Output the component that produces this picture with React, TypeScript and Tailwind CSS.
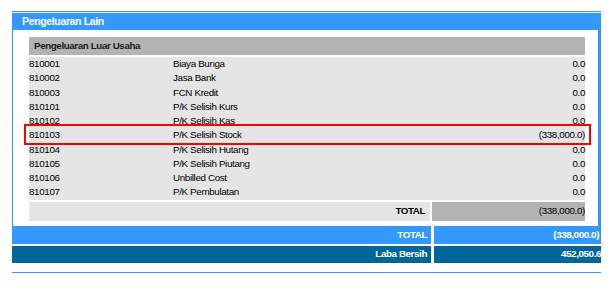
const rows = [
  { code: '810001', name: 'Biaya Bunga', amount: '0.0' },
  { code: '810002', name: 'Jasa Bank', amount: '0.0' },
  { code: '810003', name: 'FCN Kredit', amount: '0.0' },
  { code: '810101', name: 'P/K Selisih Kurs', amount: '0.0' },
  { code: '810102', name: 'P/K Selisih Kas', amount: '0.0' },
  { code: '810103', name: 'P/K Selisih Stock', amount: '(338,000.0)', marked: true },
  { code: '810104', name: 'P/K Selisih Hutang', amount: '0.0' },
  { code: '810105', name: 'P/K Selisih Piutang', amount: '0.0' },
  { code: '810106', name: 'Unbilled Cost', amount: '0.0' },
  { code: '810107', name: 'P/K Pembulatan', amount: '0.0' },
];

export default function App() {
  return (
    <div className="h-[289px] w-[613px] bg-white pt-[11px] font-['Liberation_Sans',Arial,sans-serif] text-[9.8px] leading-none tracking-[-0.35px] text-black">
      <div className="ml-[12px] w-[589px]">
        <div className="border-t border-[#3399ff] pt-px">
          <div className="flex h-[17px] items-center bg-[#3399ff] pl-[10px] text-[10.5px] font-bold tracking-[-0.35px] text-white">
            Pengeluaran Lain
          </div>
        </div>

        <div className="border-l border-r-[3px] border-[#3399ff] pb-[5px] pl-[16px] pr-[13px] pt-[7px]">
          <div className="flex h-[18px] items-center bg-[#b3b3b3] pl-[5px] font-bold tracking-[-0.4px] text-[#1a1a1a]">
            Pengeluaran Luar Usaha
          </div>

          <div className="mt-[2px] bg-[#e5e5e5]">
            {rows.map((r) => (
              <div key={r.code} className="relative flex h-[14.25px] items-center">
                <span className="w-[144px]">{r.code}</span>
                <span className="flex-1">{r.name}</span>
                <span>{r.amount}</span>
                {r.marked && (
                  <div className="pointer-events-none absolute -bottom-[2px] -left-[5px] -right-[6px] -top-[4px] border-2 border-[#ff0000]" />
                )}
              </div>
            ))}
          </div>

          <div className="mt-[2px] flex h-[19px] gap-[2px]">
            <div className="flex w-[401px] items-center justify-end bg-[#e5e5e5] pr-[5px] font-bold tracking-[-0.45px]">TOTAL</div>
            <div className="flex flex-1 items-center justify-end bg-[#b3b3b3]">(338,000.0)</div>
          </div>
        </div>

        <div className="flex h-[18px] gap-[3px] font-bold tracking-[-0.4px] text-white">
          <div className="flex w-[419px] items-center justify-end bg-[#3399ff] pr-[4px]">TOTAL</div>
          <div className="flex flex-1 items-center justify-end bg-[#3399ff] pr-[2px]">(338,000.0)</div>
        </div>
        <div className="mt-[2px] flex h-[17px] gap-[3px] font-bold tracking-[-0.4px] text-white">
          <div className="flex w-[419px] items-center justify-end bg-[#006699] pr-[4px]">Laba Bersih</div>
          <div className="flex flex-1 items-center justify-end bg-[#006699]">452,050.6</div>
        </div>

        <div className="mt-[9px] border-t border-[#3399ff]" />
      </div>
    </div>
  );
}
